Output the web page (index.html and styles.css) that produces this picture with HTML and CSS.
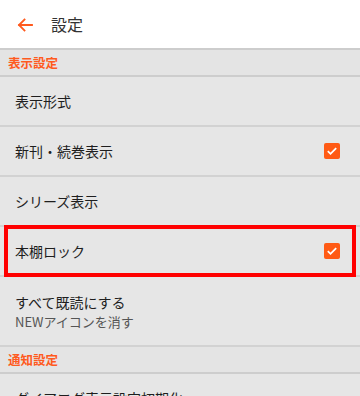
FILE: index.html
```html
<!DOCTYPE html>
<html lang="ja">
<head>
<meta charset="utf-8">
<link rel="stylesheet" href="styles.css">
</head>
<body>
<header class="appbar">
  <svg class="back" width="16" height="14" viewBox="0 0 16 14"><path d="M15 7H2M7.5 1.5L2 7l5.5 5.5" fill="none" stroke="#ff5a1e" stroke-width="1.8" stroke-linecap="square"/></svg>
  <h1 class="title">設定</h1>
</header>
<div class="section">表示設定</div>
<div class="row"><span class="label">表示形式</span></div>
<div class="row"><span class="label">新刊・続巻表示</span><span class="check"><svg width="16" height="16" viewBox="0 0 16 16"><path d="M3.8 8.2l2.7 2.6 5.7-5.6" fill="none" stroke="#fff" stroke-width="1.8"/></svg></span></div>
<div class="row"><span class="label">シリーズ表示</span></div>
<div class="row marked"><span class="label">本棚ロック</span><span class="check"><svg width="16" height="16" viewBox="0 0 16 16"><path d="M3.8 8.2l2.7 2.6 5.7-5.6" fill="none" stroke="#fff" stroke-width="1.8"/></svg></span></div>
<div class="row tall"><div class="stack"><span class="label">すべて既読にする</span><span class="sub">NEWアイコンを消す</span></div></div>
<div class="section">通知設定</div>
<div class="row"><span class="label">ダイアログ表示設定初期化</span></div>
</body>
</html>
```
FILE: styles.css
```css
html, body { margin: 0; padding: 0; }
body {
  width: 360px;
  background: #e6e6e6;
  font-family: "Noto Sans CJK JP", "Noto Sans", sans-serif;
  color: #222;
  overflow: hidden;
}
.appbar {
  height: 48px;
  background: #fff;
  display: flex;
  align-items: center;
  border-bottom: 2px solid #cdcdcd;
}
.back { margin-left: 17px; margin-top: 1px; }
.title {
  margin: 0 0 0 18px;
  font-size: 16px;
  font-weight: 400;
  color: #333;
}
.section {
  height: 25px;
  display: flex;
  align-items: center;
  padding-left: 8px;
  font-size: 12.5px;
  font-weight: 700;
  color: #ff5a1e;
  background: #e4e4e4;
  border-bottom: 2px solid #cdcdcd;
}
.row {
  height: 48px;
  display: flex;
  align-items: center;
  justify-content: space-between;
  padding: 0 20px 0 15px;
  border-bottom: 2px solid #d2d2d2;
  background: #e6e6e6;
}
.row.tall { height: 68px; }
.label { font-size: 14px; color: #1e1e1e; }
.stack { display: flex; flex-direction: column; margin-top: 1px; }
.stack .label { line-height: 20px; }
.sub { font-size: 13px; color: #555; line-height: 20px; }
.check {
  width: 16px; height: 16px;
  background: #ff5a14;
  border-radius: 2px;
  display: flex;
}
.marked { position: relative; }
.marked::after {
  content: "";
  position: absolute;
  left: 4px; right: 4px; top: -2px; bottom: -2px;
  border: 4px solid #ff0000;
}
```
